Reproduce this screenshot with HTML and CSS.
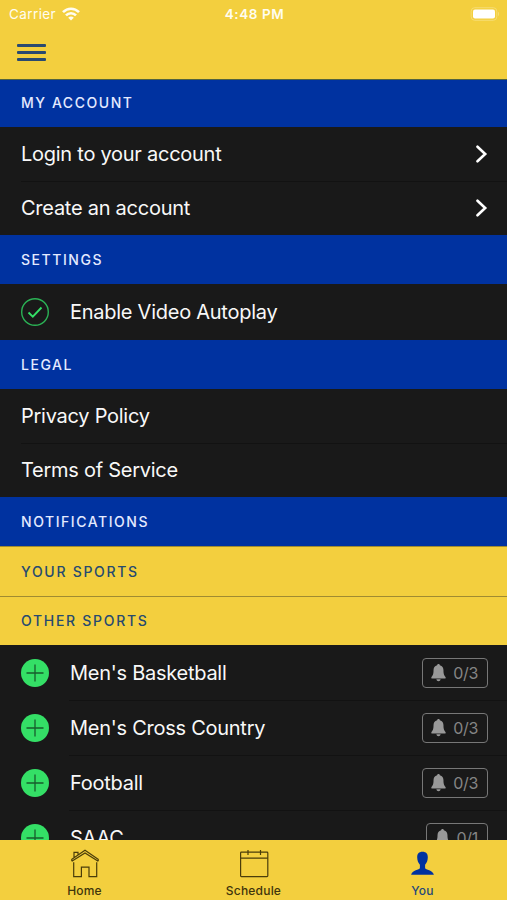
FILE: index.html
```
<!DOCTYPE html>
<html lang="en">
<head>
    <meta charset="UTF-8">
    <meta name="viewport" content="width=device-width, initial-scale=1.0">
    <title>My Account</title>
    <link rel="stylesheet" href="styles.css">
</head>
<body>
    <svg class="sprite" aria-hidden="true">
        <symbol id="chevron" viewBox="0 0 12 18">
            <path d="M1.5 1.7 L9.2 9 L1.5 16.3" fill="none" stroke="#fff" stroke-width="2.6" stroke-linecap="round"/>
        </symbol>
        <symbol id="plus" viewBox="0 0 28 28">
            <circle cx="14" cy="14" r="14" fill="#34df66"/>
            <path d="M14 5.5 V22.5 M5.5 14 H22.5" fill="none" stroke="#175c2d" stroke-width="1.3"/>
        </symbol>
        <symbol id="bell" viewBox="0 0 14 17">
            <path d="M7 0 C6.2 0 5.7 .6 5.7 1.2 C3.4 1.8 2.3 3.6 2.3 6 C2.3 10 1.5 11 0.3 12.4 C0 13 .2 13.6 .9 13.6 H13.1 C13.8 13.6 14 13 13.7 12.4 C12.5 11 11.7 10 11.7 6 C11.7 3.6 10.6 1.8 8.3 1.2 C8.3 .6 7.8 0 7 0 Z M5 14.4 C5.2 16.9 8.8 16.9 9 14.4 Z" fill="#999"/>
        </symbol>
    </svg>

    <header class="header">
        <div class="status-bar">
            <div class="carrier">
                <span>Carrier</span>
                <svg width="18" height="14" viewBox="0 0 18 14">
                    <g fill="none" stroke="#fffdf0" stroke-width="2.6">
                        <path d="M1 5.2 C5.6 .6 12.4 .6 17 5.2"/>
                        <path d="M4 8.4 C6.8 5.5 11.2 5.5 14 8.4"/>
                    </g>
                    <path d="M6.2 10.7 C7.8 9.1 10.2 9.1 11.8 10.7 L9 13.6 Z" fill="#fffdf0"/>
                </svg>
            </div>
            <div class="time">4:48 PM</div>
            <div class="battery">
                <svg width="30" height="14" viewBox="0 0 30 14">
                    <rect x="1.2" y=".7" width="25.6" height="12.6" rx="3.5" fill="none" stroke="#f6dc72"/>
                    <rect x="3" y="2.5" width="22" height="9" rx="2" fill="#fff"/>
                    <path d="M28 4.8 C29.5 5.4 29.5 8.6 28 9.2 Z" fill="#f6dc72"/>
                </svg>
            </div>
        </div>
        <button class="menu" aria-label="Menu">
            <span></span>
            <span></span>
            <span></span>
        </button>
    </header>

    <main class="content">
        <h2 class="section first">MY ACCOUNT</h2>
        <div class="row">
            <span class="label">Login to your account</span>
            <svg class="chevron"><use href="#chevron"/></svg>
        </div>
        <div class="row">
            <span class="label">Create an account</span>
            <svg class="chevron"><use href="#chevron"/></svg>
        </div>

        <h2 class="section">SETTINGS</h2>
        <div class="row icon-row setting">
            <svg class="icon" viewBox="0 0 28 28">
                <circle cx="14" cy="14" r="13.3" fill="none" stroke="#2bb255" stroke-width="1.4"/>
                <path d="M7.5 14.5 L11.8 18.6 L20.5 9.5" fill="none" stroke="#34df66" stroke-width="1.9"/>
            </svg>
            <span class="label">Enable Video Autoplay</span>
        </div>

        <h2 class="section">LEGAL</h2>
        <div class="row">
            <span class="label">Privacy Policy</span>
        </div>
        <div class="row">
            <span class="label">Terms of Service</span>
        </div>

        <h2 class="section">NOTIFICATIONS</h2>
        <h3 class="section sub">YOUR SPORTS</h3>
        <h3 class="section sub">OTHER SPORTS</h3>
        <div class="row icon-row">
            <svg class="icon"><use href="#plus"/></svg>
            <span class="label">Men's Basketball</span>
            <div class="badge"><svg class="bell"><use href="#bell"/></svg>0/3</div>
        </div>
        <div class="row icon-row">
            <svg class="icon"><use href="#plus"/></svg>
            <span class="label">Men's Cross Country</span>
            <div class="badge"><svg class="bell"><use href="#bell"/></svg>0/3</div>
        </div>
        <div class="row icon-row">
            <svg class="icon"><use href="#plus"/></svg>
            <span class="label">Football</span>
            <div class="badge"><svg class="bell"><use href="#bell"/></svg>0/3</div>
        </div>
        <div class="row icon-row">
            <svg class="icon"><use href="#plus"/></svg>
            <span class="label">SAAC</span>
            <div class="badge"><svg class="bell"><use href="#bell"/></svg>0/1</div>
        </div>
    </main>

    <nav class="tabs">
        <a class="tab">
            <svg width="30" height="30" viewBox="0 0 30 30" fill="none" stroke="#4a3d0a" stroke-width="1.2">
                <path d="M3.7 13.2 V27.7 H11.4 V18.2 H19 V27.7 H26.7 V13.2 M1.8 12.2 L15 3.9 L28.2 12.2 M1.8 12.2 V10.3 L15 1.3 L28.2 10.3 V12.2 M4 8.8 V3.4 H8 V6"/>
            </svg>
            <span>Home</span>
        </a>
        <a class="tab">
            <svg width="30" height="30" viewBox="0 0 30 30" fill="none" stroke="#4a3d0a" stroke-width="1.2">
                <rect x="1.6" y="3.2" width="27.2" height="24.4" rx=".8"/>
                <path d="M1.6 9.2 H28.8 M9 1 V6 M21.5 1 V6"/>
            </svg>
            <span>Schedule</span>
        </a>
        <a class="tab active">
            <svg width="30" height="30" viewBox="0 0 30 30">
                <path d="M14.5 2.7 C10.8 2.7 9.1 4.8 9.2 8.5 C9.3 11.8 10.3 14.1 11.9 15.7 V18.9 C11.5 21.1 4.1 20.7 3.1 25.8 H25.9 C24.9 20.7 17.5 21.1 17.1 18.9 V15.7 C18.7 14.1 19.7 11.8 19.8 8.5 C19.9 4.8 18.2 2.7 14.5 2.7 Z" fill="#0032a0"/>
            </svg>
            <span>You</span>
        </a>
    </nav>
</body>
</html>
```
FILE: styles.css
```
* {
    box-sizing: border-box;
    margin: 0;
    padding: 0;
}

body {
    display: flex;
    flex-direction: column;
    height: 900px;
    overflow: hidden;
    background-color: #191919;
    color: #f8f8f8;
    font-family: Inter, "Liberation Sans", sans-serif;
}

.sprite {
    display: none;
}

.header {
    flex: none;
    height: 79px;
    background-color: #f3cf3e;
}

.status-bar {
    display: flex;
    align-items: center;
    height: 27px;
    padding: 0 7px 0 9px;
    color: #fffdf0;
    font-size: 13.5px;
}

.carrier, .battery {
    flex: 1;
    display: flex;
    align-items: center;
    gap: 6px;
}

.carrier {
    letter-spacing: 0.4px;
}

.battery {
    justify-content: flex-end;
}

.time {
    font-weight: 600;
    letter-spacing: 0.6px;
}

.menu {
    display: flex;
    flex-direction: column;
    gap: 4px;
    margin: 17px 0 0 17px;
    border: none;
    background: none;
}

.menu span {
    width: 28.5px;
    height: 3px;
    border-radius: 1px;
    background-color: #2a4a70;
}

.content {
    flex: 1;
    min-height: 0;
    overflow: hidden;
}

.section {
    display: flex;
    align-items: center;
    height: 49px;
    padding-left: 21px;
    background-color: #0032a0;
    color: #e4eaff;
    font-size: 14px;
    font-weight: 500;
    letter-spacing: 1.55px;
}

.section.first {
    height: 48px;
    padding-bottom: 2px;
    border-top: 1px solid #51633f;
}

.section.sub {
    height: 49.5px;
    border-top: 1px solid #a08b31;
    background-color: #f3cf3e;
    color: #264a70;
    letter-spacing: 1.7px;
}

.row {
    display: flex;
    align-items: center;
    height: 54px;
    padding: 0 19px 0 21px;
    font-size: 20px;
}

.row + .row {
    background: linear-gradient(#121212, #121212) 21px 0 / 100% 1px no-repeat;
}

.icon-row {
    height: 55px;
}

.icon-row + .icon-row {
    background-position: 69px 0;
}

.setting {
    height: 56px;
}

.label {
    flex: 1;
    letter-spacing: -0.26px;
}

.icon {
    width: 28px;
    height: 28px;
    margin-right: 21px;
}

.chevron {
    width: 12px;
    height: 18px;
}

.badge {
    display: flex;
    align-items: center;
    gap: 7px;
    height: 30px;
    padding: 0 9px 0 8px;
    border: 1.5px solid #777;
    border-radius: 4px;
    color: #858585;
    font-size: 16px;
    letter-spacing: -0.3px;
}

.bell {
    width: 15px;
    height: 18px;
}

.tabs {
    flex: none;
    display: flex;
    height: 60px;
    background-color: #f3cf3e;
    color: #3f350c;
}

.tab {
    flex: 1;
    display: flex;
    flex-direction: column;
    align-items: center;
    padding-top: 9px;
    font-size: 12px;
    font-weight: 500;
    line-height: 15px;
    letter-spacing: 0.2px;
    gap: 4px;
}

.tab.active {
    color: #24487a;
}
```
